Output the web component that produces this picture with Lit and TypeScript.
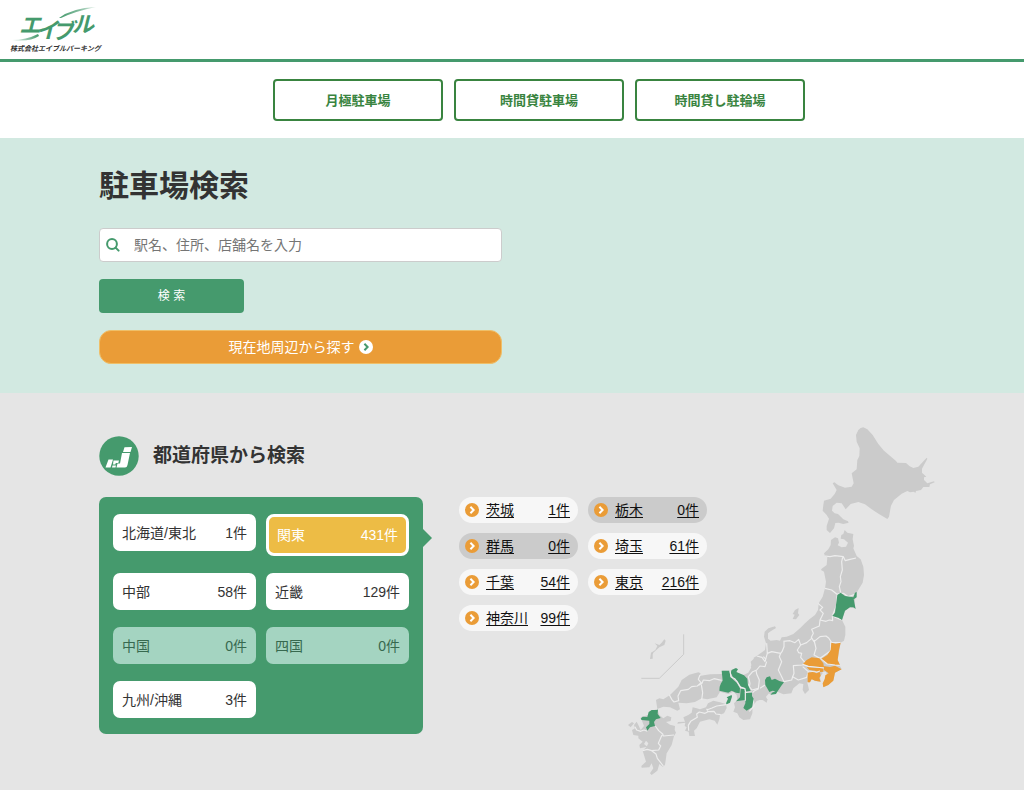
import { LitElement, html, svg, css } from "lit";
import { customElement, state } from "lit/decorators.js";
import { classMap } from "lit/directives/class-map.js";

interface Place {
  name: string;
  count: number;
}

const NAV = ["月極駐車場", "時間貸駐車場", "時間貸し駐輪場"];

const REGIONS: Place[] = [
  { name: "北海道/東北", count: 1 },
  { name: "関東", count: 431 },
  { name: "中部", count: 58 },
  { name: "近畿", count: 129 },
  { name: "中国", count: 0 },
  { name: "四国", count: 0 },
  { name: "九州/沖縄", count: 3 },
];

const PREFECTURES: Place[] = [
  { name: "茨城", count: 1 },
  { name: "栃木", count: 0 },
  { name: "群馬", count: 0 },
  { name: "埼玉", count: 61 },
  { name: "千葉", count: 54 },
  { name: "東京", count: 216 },
  { name: "神奈川", count: 99 },
];

@customElement("japan-map")
export class JapanMap extends LitElement {
  static styles = css`
    :host { display: block; }
    svg { display: block; width: 100%; height: auto; }
    .land { fill: #cbcbcb; }
    .open { fill: #459a6d; }
    .active { fill: #ea9c37; }
    .border { fill: none; stroke: #ededed; stroke-width: 3.5; stroke-linejoin: round; }
    .inset { fill: none; stroke: #cbcbcb; stroke-width: 3; }
  `;

  render() {
    return html`<svg viewBox="0 0 960 1080" role="img" aria-label="日本地図">
      ${svg`
      <g transform="translate(570 0)">
        <path class="land" d="M138 45 145 30 152 24 160 22 172 28 188 45 205 72 222 92 258 123 262 128 288 129 298 138 310 144 325 140 350 113 352 116 336 146 336 158 349 170 342 172 342 180 352 190 372 184 374 187 360 193 358 201 340 201 333 210 318 213 316 219 312 215 300 217 292 213 275 221 252 240 243 257 237 290 232 297 208 283 185 268 165 253 145 246 122 252 107 268 95 250 80 248 68 258 66 272 74 280 84 282 100 298 114 304 116 308 100 312 86 308 76 309 72 325 60 339 50 330 50 318 57 296 50 285 38 272 40 255 42 242 62 236 74 222 80 210 68 190 73 187 85 196 105 203 125 200 131 190 125 160 140 148 142 120 148 108 149 85 140 65Z"/>
      </g>
      <g transform="translate(360 300)">
        <path class="land" d="M255 108 252 100 265 88 272 75 273 60 285 52 294 55 297 68 293 76 305 82 318 80 324 68 312 58 302 56 304 45 310 42 314 30 322 38 340 42 338 58 342 78 340 85 350 108 362 118 370 140 372 165 368 188 356 208 350 218 345 240 343 265 330 262 315 272 306 300 316 320 316 345 312 362 302 368 297 395 292 425 305 447 285 458 280 480 265 495 250 501 252 480 262 468 258 455 246 455 248 460 240 470 242 485 225 483 215 475 210 487 202 487 200 480 205 500 207 510 195 522 188 510 190 492 178 490 160 505 154 520 130 523 112 515 92 524 82 515 65 512 68 525 84 540 30 540 0 530 0 468 10 468 30 462 40 448 32 440 46 420 40 414 50 408 75 390 78 370 72 350 74 335 85 325 105 319 108 324 92 334 84 340 84 356 92 362 110 360 120 362 125 352 140 350 160 342 180 325 195 310 210 296 225 285 234 270 236 250 248 230 255 205 258 185 252 155 243 150 245 146 260 135 262 112Z"/>
        <path class="land" d="M176 264 174 280 178 285 168 298 158 297 164 284 158 282 165 270Z"/>
      </g>
      <g transform="translate(0 600)">
        <path class="land" d="M395 140 392 125 410 108 440 95 450 100 450 216 438 230 442 240 440 248 425 238 410 243 398 258 397 280 390 298 370 300 358 292 352 280 340 275 345 262 342 250 352 240 350 225 340 215 325 222 300 215 290 232 262 238 245 235 225 246 200 250 175 248 180 268 172 272 150 262 130 260 112 267 108 240 118 235 130 238 150 225 175 200 185 180 208 164 235 157 242 160 238 168 270 163 305 162 308 152 330 152 345 145 352 158 370 165 385 158Z"/>
        <path class="land" d="M195 305 190 292 205 285 215 278 218 262 230 265 240 268 258 262 264 250 280 242 300 247 318 252 320 264 312 280 300 284 298 298 292 314 284 302 268 298 240 305 230 325 222 332 225 348 208 348 206 335 195 332 200 322 194 318 196 308 172 311 174 306Z"/>
        <path class="land" d="M62 292 85 285 92 272 112 268 118 285 130 295 142 287 154 292 152 303 138 306 150 314 165 318 164 330 168 338 162 348 155 375 140 400 135 435 128 440 118 432 112 452 95 465 90 460 100 445 95 430 88 442 65 443 64 438 78 425 68 392 80 380 85 370 78 362 72 372 82 380 60 385 58 375 68 365 55 355 55 347 40 345 36 330 45 325 42 315 50 305 55 315 62 330 72 318Z"/>
        <path class="land" d="M24 315 36 306 42 310 32 322Z"/>
        <path class="land" d="M133 58 137 62 133 75 118 82 100 98 98 104 98 116 90 117 93 98 106 90 112 78 104 70 118 75 125 68Z"/>
        <path class="inset" d="M191 43V103L118 175H64"/>
      </g>
      <g transform="translate(360 300)">
        <path class="border" d="M255 108 270 110 285 107 310 110 316 122 330 118 348 114M308 112 305 125 307 150 301 170 303 185 298 200 302 218M255 205 275 210 290 222 310 220 325 230 348 222M292 222 290 245 290 255 278 285M234 250 248 262 240 270 250 280 245 290 240 300 258 304 268 300 278 302 277 288 305 300M240 300 238 318 215 328 220 340 214 352 222 365 240 350 258 348 266 354 275 368 302 368M222 360 228 385 222 405 240 415M272 365 272 392 250 408 240 415M130 364 150 362 165 368 176 358 182 375 200 368 214 356M182 375 172 390 176 398 185 400 182 412 195 428 188 435M132 362 132 380 126 395 122 400 95 395 82 400 80 370M82 400 75 425 66 412 50 408M122 400 118 410 125 425 115 450 125 470 132 485 155 480 158 470M80 425 75 440 60 438 50 450 38 455 25 470 30 490 28 500 36 510 55 505 58 480 50 462 48 450M60 505 75 495M188 435 160 437 162 460 158 470 175 480 200 472 205 455 188 440M10 468 20 485 28 500"/>
        <path class="active" d="M274 368 287 371 302 368 297 390 293 420 300 435 285 435 262 432 242 418 262 405 272 390ZM188 433 200 420 215 412 238 415 250 430 252 442 225 440 205 438ZM200 441 225 443 250 445 250 455 232 457 225 452 208 450ZM203 458 222 455 230 460 240 456 242 468 238 474 242 485 225 482 215 478 210 487 203 487ZM250 438 270 441 285 437 305 448 285 458 280 482 265 495 250 502 248 490 254 478 256 466 266 460 252 450Z"/>
        <path class="border" d="M242 416 262 432 285 435 299 436M188 433 205 439 225 441 252 444M205 453 230 456 240 453"/>
        <path class="open" d="M292 225 302 218 315 228 340 232 345 218 350 216 350 232 341 238 347 267 340 262 330 262 315 272 306 300 295 293 277 288 285 278 288 255Z"/>
        <path class="open" d="M75 480 80 472 90 469 95 480 105 476 118 483 132 487 124 497 112 515 108 522 92 524 96 518 106 514 98 512 88 516 76 495Z"/>
      </g>
      <g transform="translate(0 600)">
        <path class="border" d="M148 224 155 238 162 246 176 242 174 228 182 212 205 208 215 200 232 198 243 188 235 178 240 165M236 196 246 190 250 180 268 182 282 176 305 181M244 194 248 218 245 240M438 118 430 110M398 218 404 212 416 206M260 266 264 275 255 280 238 276 230 282 232 292 212 304 205 316 206 332M260 270 276 264 290 258 318 254M264 275 282 274 288 282 302 284M106 318 116 332 128 342 130 348 162 345M126 345 115 370 122 378 116 390 95 392 82 388 68 392M95 392 108 402 112 415 130 438M45 320 50 330 62 334 72 330 82 334M400 238 402 258 388 274"/>
        <path class="open" d="M305 152 328 152 332 172 350 188 360 205 359 220 348 218 335 212 325 218 298 212 299 200 303 190 308 182Z"/>
        <path class="open" d="M332 158 335 150 348 144 354 148 349 156 372 166 382 176 384 195 392 213 376 216 374 204 360 198 352 182 340 174Z"/>
        <path class="open" d="M362 206 374 206 376 240 348 244 360 232ZM377 216 396 216 396 228 401 236 396 262 380 272 370 264 376 250ZM335 225 336 230 330 248 320 253 318 250 324 236 320 232Z"/>
        <path class="border" d="M330 152 333 170 344 176 352 186 362 202 375 206 377 217 396 216M376 216V242"/>
        <path class="open" d="M62 296 68 290 82 291 86 276 95 270 112 270 114 267 113 282 122 294 108 298 102 306 105 318 90 322 82 332 78 322 88 312 88 302 65 300Z"/>
      </g>`}
    </svg>`;
  }
}

@customElement("app-root")
export class AppRoot extends LitElement {
  @state() private region = "関東";

  static styles = css`
    :host {
      display: flex;
      flex-direction: column;
      min-height: 100vh;
      background: #fff;
      color: #333;
      font-family: "Liberation Sans", "Noto Sans CJK JP", sans-serif;
      font-size: 14px;
      line-height: 20px;
    }
    * { box-sizing: border-box; }
    button, input { font: inherit; color: inherit; margin: 0; }
    button { cursor: pointer; }
    h1, h2, ul { margin: 0; padding: 0; }
    ul { list-style: none; }
    .header { height: 62px; padding: 6px 10px 0; border-bottom: 3px solid #459a6d; }
    .logo { display: inline-block; text-decoration: none; }
    .logo svg { display: block; overflow: visible; }
    .mark { font-size: 22px; font-weight: 700; font-style: italic; fill: #459a6d; }
    .company { font-size: 7px; font-weight: 700; font-style: italic; fill: #333; }
    .nav { display: flex; justify-content: center; gap: 11px; padding: 17px 0; margin-left: 54px; }
    .nav-link {
      display: flex; align-items: center; justify-content: center;
      width: 170px; height: 42px; padding-top: 1px;
      border: 2px solid #398440; border-radius: 4px;
      color: #398440; font-size: 13px; font-weight: 700; text-decoration: none;
    }
    .container { width: 100%; max-width: 826px; margin: 0 auto; }
    .search { background: #d2e9e1; padding: 26px 0 29px; }
    .form { display: flex; flex-direction: column; align-items: flex-start; gap: 17px; max-width: 403px; }
    .title { font-size: 30px; line-height: 44px; font-weight: 700; margin-bottom: 3px; }
    .field { position: relative; width: 100%; }
    .field svg { position: absolute; left: 7px; top: 10px; }
    .input {
      display: block; width: 100%; height: 34px; padding: 0 12px 0 34px;
      border: 1px solid #ccc; border-radius: 4px; background: #fff;
    }
    .input::placeholder { color: #757575; opacity: 1; }
    .submit {
      width: 145px; height: 34px; border: 0; border-radius: 4px;
      background: #459a6d; color: #fff; font-size: 12px;
    }
    .nearby {
      display: flex; align-items: center; justify-content: center; gap: 4px;
      width: 100%; height: 34px; border: 1px solid #efbf68; border-radius: 12px;
      background: #ea9c37; color: #fff;
    }
    .areas { flex: 1; background: #e5e5e5; padding: 27px 0 10px; }
    .grid {
      display: grid; grid-template-columns: 324px 248px 1fr; grid-template-rows: auto 1fr;
      column-gap: 36px; align-items: start;
    }
    .heading {
      grid-area: 1 / 1 / 2 / 3; display: flex; align-items: center; gap: 14px;
      padding: 16px 0 21px; font-size: 19px; line-height: 40px;
    }
    .heading svg { display: block; }
    .panel {
      grid-area: 2 / 1; position: relative; display: grid; grid-template-columns: 1fr 1fr; gap: 17px 10px;
      align-items: start; padding: 17px 14px 16px; background: #459a6d; border-radius: 7px;
    }
    .panel::after {
      content: ""; position: absolute; left: 100%; top: 32px;
      border: 9px solid transparent; border-left-color: #459a6d; border-right: 0;
    }
    .region {
      display: flex; justify-content: space-between; align-items: center; width: 100%;
      height: 37px; padding: 0 9px; border: 0; border-radius: 7px; background: #fff;
    }
    .region.on { height: 42px; border: 3px solid #fff; border-radius: 8px; background: #edbc45; color: #fff; padding: 0 8px; }
    .region:disabled { background: #a4d4c1; color: #37694f; cursor: default; }
    .prefs { grid-area: 2 / 2; display: grid; grid-template-columns: 1fr 1fr; gap: 10px; z-index: 1; }
    .pref {
      display: flex; align-items: center; height: 26px; padding: 0 8px 0 6px; border-radius: 13px;
      background: #f7f7f7; color: #111; text-decoration: none;
    }
    .pref.none { background: #cbcbcb; }
    .pref svg { margin-right: 7px; }
    .text { text-decoration: underline; text-underline-offset: 2px; text-decoration-thickness: 1px; }
    .count { margin-left: auto; }
    .map { grid-area: 1 / 2 / 3 / 4; justify-self: end; width: 320px; margin-right: -15px; }
    @media (max-width: 900px) {
      .container { padding: 0 20px; }
      .nav { margin-left: 0; }
    }
  `;

  private arrow(disc: string, stroke: string) {
    return html`<svg width="14" height="14" viewBox="0 0 14 14" aria-hidden="true">
      <circle cx="7" cy="7" r="7" fill=${disc} />
      <path d="M5.4 3.8 8.6 7 5.4 10.2" fill="none" stroke=${stroke} stroke-width="2" />
    </svg>`;
  }

  render() {
    return html`
      <header class="header">
        <a class="logo" href="#" aria-label="株式会社エイブルパーキング">
          <svg width="94" height="48" viewBox="0 0 94 48">
            <defs>
              <linearGradient id="tail"><stop offset="0" stop-color="#459a6d" stop-opacity="0.1" /><stop offset="1" stop-color="#459a6d" /></linearGradient>
              <linearGradient id="head"><stop offset="0" stop-color="#459a6d" /><stop offset="0.5" stop-color="#459a6d" stop-opacity="0.7" /><stop offset="1" stop-color="#459a6d" stop-opacity="0.2" /></linearGradient>
            </defs>
            <path d="M2 34Q16 34 28 28L29 30Q20 36 2 34Z" fill="url(#tail)" />
            <path d="M49 12Q62 2 86 1Q66 5 51 12Z" fill="url(#head)" />
            <text class="mark" x="9 26 42 62" y="27 32 33 26">エイブル</text>
            <text class="company" x="0" y="45">株式会社エイブルパーキング</text>
          </svg>
        </a>
      </header>
      <nav class="nav">
        ${NAV.map((label) => html`<a class="nav-link" href="#">${label}</a>`)}
      </nav>
      <section class="search">
        <div class="container">
          <form class="form" @submit=${(e: Event) => e.preventDefault()}>
            <h1 class="title">駐車場検索</h1>
            <div class="field">
              <input class="input" id="keyword" type="text" aria-label="駅名、住所、店舗名を入力" placeholder="駅名、住所、店舗名を入力" />
              <svg width="14" height="14" viewBox="0 0 14 14" fill="none" stroke="#459a6d" stroke-width="2" stroke-linecap="round" aria-hidden="true">
                <circle cx="6" cy="6" r="4.9" /><path d="M9.6 9.6 12.6 12.6" />
              </svg>
            </div>
            <button class="submit" type="submit">検 索</button>
            <button class="nearby" type="button">現在地周辺から探す${this.arrow("#fff", "#459a6d")}</button>
          </form>
        </div>
      </section>
      <section class="areas">
        <div class="container grid">
          <h2 class="heading">
            <svg width="40" height="40" viewBox="0 0 40 40" aria-hidden="true">
              <circle cx="20" cy="20" r="19.7" fill="#459a6d" />
              <path fill="#fff" d="M25.500 11.200 33 11 31.500 16H24ZM23 17H31L28.500 29Q28 31.500 26 31.500H17.500L18.500 27.500H21ZM9.500 23.500H14L11.500 31.500H6.500ZM14.500 24.500H20L19.300 27H16.800L16.300 28.500H14ZM13.500 29.500H17L16.500 31.500H13Z" />
            </svg>
            都道府県から検索
          </h2>
          <div class="panel">
            ${REGIONS.map(
              (r) => html`<button
                type="button"
                class=${classMap({ region: true, on: r.name === this.region })}
                ?disabled=${r.count === 0}
                @click=${() => (this.region = r.name)}
              ><span>${r.name}</span><span>${r.count}件</span></button>`
            )}
          </div>
          <ul class="prefs">
            ${PREFECTURES.map(
              (p) => html`<li><a href="#" class=${classMap({ pref: true, none: p.count === 0 })}>
                ${this.arrow("#ea9c37", "#fff")}<span class="text">${p.name}</span><span class="text count">${p.count}件</span>
              </a></li>`
            )}
          </ul>
          <japan-map class="map"></japan-map>
        </div>
      </section>
    `;
  }
}
